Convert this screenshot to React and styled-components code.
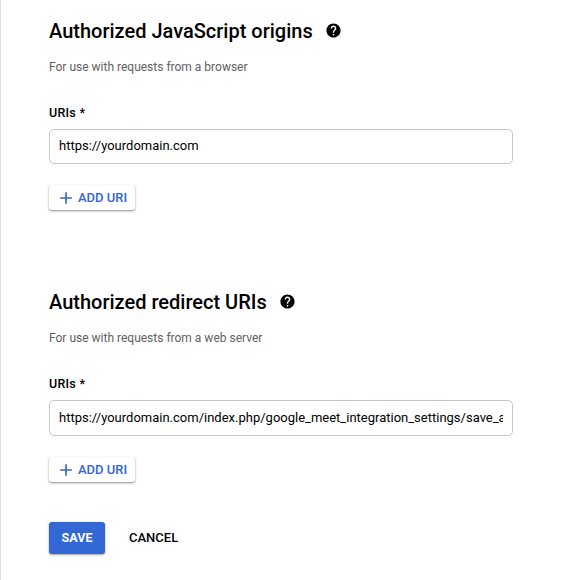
import React from "react";
import styled, { createGlobalStyle } from "styled-components";
import { MdAdd, MdHelp } from "react-icons/md";

const GlobalStyle = createGlobalStyle`
  *, *::before, *::after { box-sizing: border-box; }
  body { margin: 0; background: #fff; overflow: hidden; }
  button, input { font-family: Roboto, sans-serif; }
`;

const Page = styled.main`
  height: 580px;
  padding: 19px 56px 0 48px;
  border-left: 1px solid #e0e0e0;
  background: #fff;
  color: #000;
  font-family: Roboto, sans-serif;
`;

const Section = styled.section`
  display: flex;
  flex-direction: column;
  align-items: flex-start;
  height: ${(p) => p.$height}px;
`;

const Heading = styled.div`
  display: flex;
  align-items: center;
  gap: 12px;
  height: 24px;
`;

const Title = styled.h2`
  margin: 0;
  font-size: 20px;
  line-height: 24px;
  font-weight: 500;
  white-space: nowrap;
`;

const HelpIcon = styled(MdHelp)`
  width: 17px;
  height: 17px;
  margin-top: -2px;
`;

const Description = styled.p`
  margin: 16px 0 0;
  font-size: 12px;
  line-height: 16px;
  color: #616161;
`;

const Label = styled.label`
  margin-top: 30px;
  font-size: 12.5px;
  line-height: 16px;
  font-weight: 500;
  letter-spacing: 0.25px;
`;

const UriInput = styled.input`
  width: 464px;
  height: ${(p) => p.$height}px;
  margin-top: 8px;
  padding: 0 9px 2px;
  border: 1px solid #c6c6c6;
  border-radius: 5px;
  outline: none;
  background: #fff;
  color: #000;
  font-size: 13px;
`;

const Button = styled.button`
  display: inline-flex;
  align-items: center;
  border: 0;
  padding: 0;
  border-radius: 3px;
  background: transparent;
  color: #000;
  font-size: 13px;
  font-weight: 500;
  white-space: nowrap;
`;

const AddButton = styled(Button)`
  width: 86px;
  height: 25px;
  margin-top: 21px;
  padding-left: 7px;
  gap: 2px;
  color: #3367d6;
  background: #fff;
  box-shadow: 0 1px 2px rgba(0, 0, 0, 0.35), 0 1px 3px rgba(0, 0, 0, 0.12);
`;

const AddIcon = styled(MdAdd)`
  width: 20px;
  height: 20px;
`;

const Actions = styled.footer`
  display: flex;
  align-items: center;
  gap: 24px;
`;

const SaveButton = styled(Button)`
  justify-content: center;
  width: 56px;
  height: 32px;
  padding-bottom: 1px;
  color: #fff;
  background: #3367d6;
  font-size: 12.5px;
  font-weight: 700;
  letter-spacing: 0.1px;
  box-shadow: 0 1px 2px rgba(0, 0, 0, 0.35), 0 0 2px rgba(0, 0, 0, 0.12);
`;

const CancelButton = styled(Button)`
  padding-bottom: 2px;
`;

function UriSection({ id, title, description, value, height, inputHeight }) {
  return (
    <Section $height={height}>
      <Heading>
        <Title>{title}</Title>
        <HelpIcon aria-label="Help" />
      </Heading>
      <Description>{description}</Description>
      <Label htmlFor={id}>URIs *</Label>
      <UriInput id={id} $height={inputHeight} value={value} readOnly />
      <AddButton type="button">
        <AddIcon />
        ADD URI
      </AddButton>
    </Section>
  );
}

export default function App() {
  return (
    <>
      <GlobalStyle />
      <Page>
        <UriSection
          id="origins"
          title="Authorized JavaScript origins"
          description="For use with requests from a browser"
          value="https://yourdomain.com"
          height={271}
          inputHeight={35}
        />
        <UriSection
          id="redirects"
          title="Authorized redirect URIs"
          description="For use with requests from a web server"
          value="https://yourdomain.com/index.php/google_meet_integration_settings/save_access_token"
          height={232}
          inputHeight={36}
        />
        <Actions>
          <SaveButton type="button">SAVE</SaveButton>
          <CancelButton type="button">CANCEL</CancelButton>
        </Actions>
      </Page>
    </>
  );
}
